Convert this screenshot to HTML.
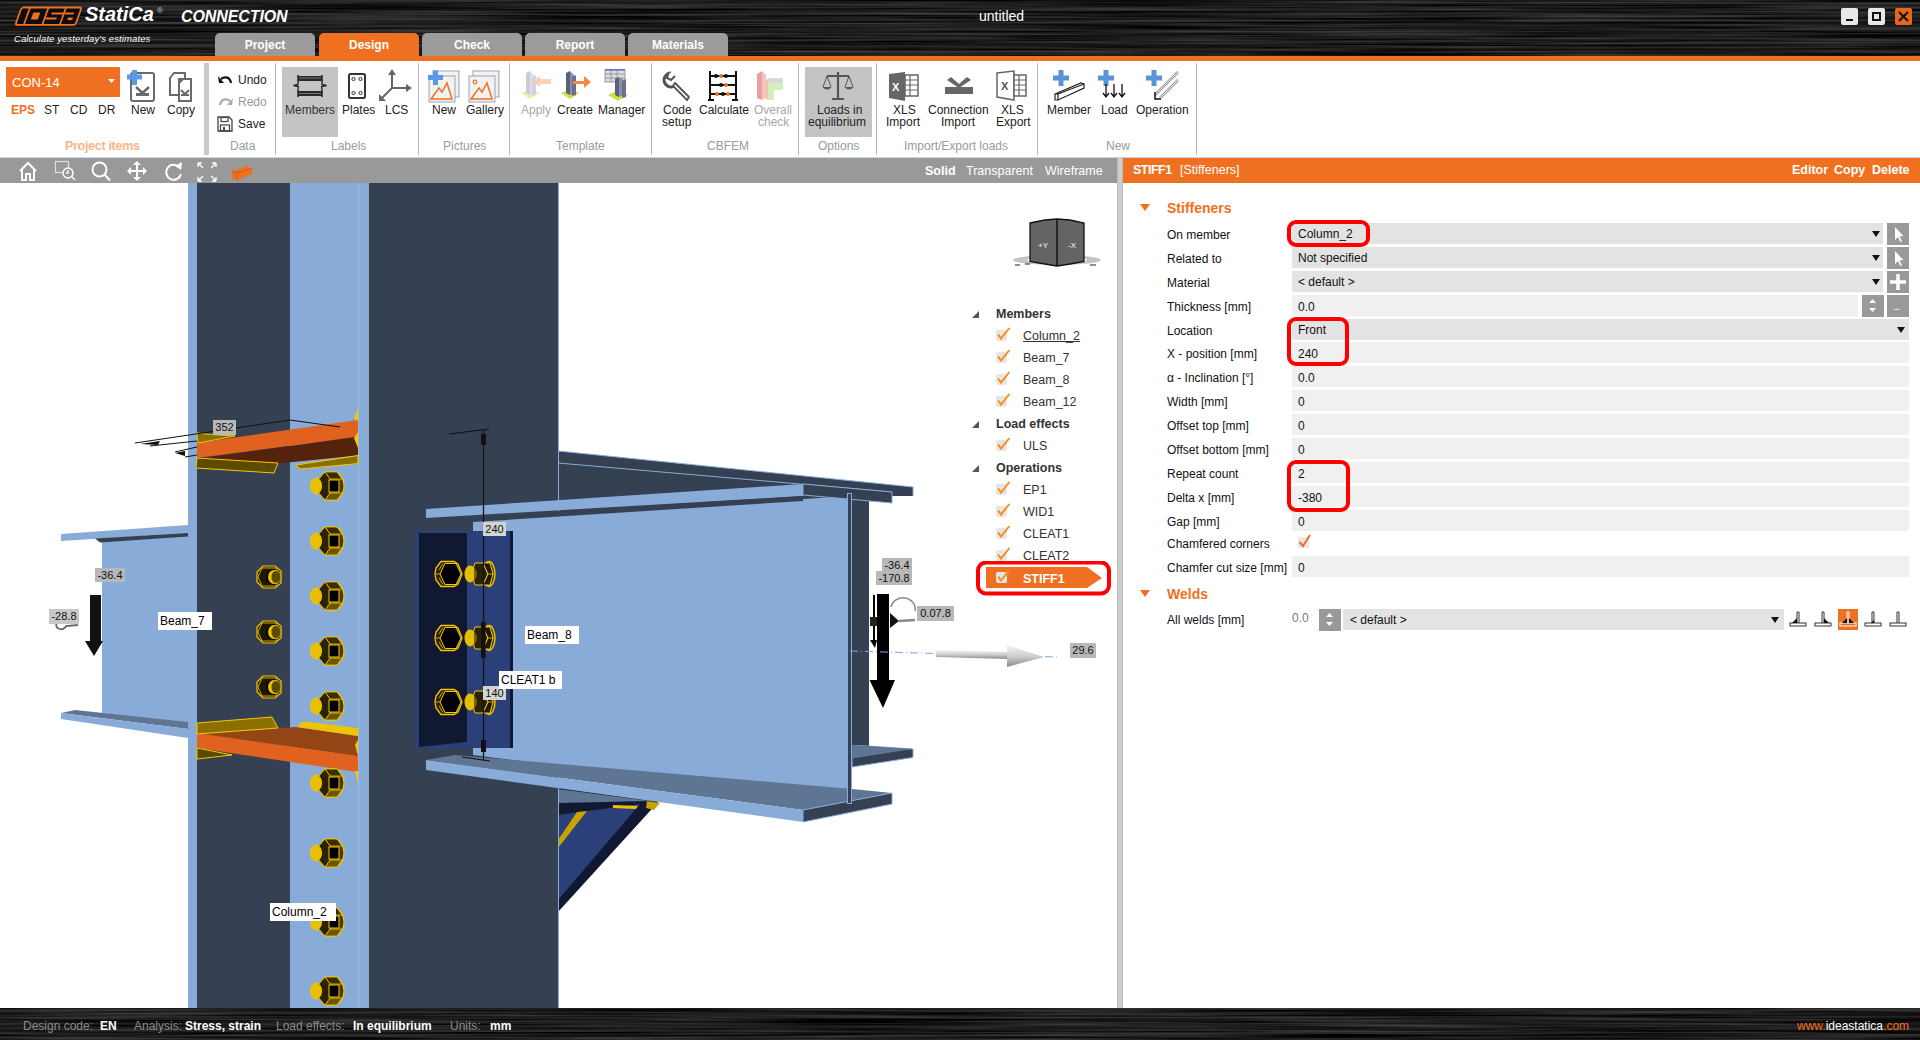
<!DOCTYPE html>
<html><head><meta charset="utf-8">
<style>
*{margin:0;padding:0;box-sizing:border-box}
html,body{width:1920px;height:1040px;overflow:hidden;background:#fff;font-family:"Liberation Sans",sans-serif;white-space:nowrap}
.a{position:absolute}
#title{left:0;top:0;width:1920px;height:56px;background:#151515;
 background-image:repeating-linear-gradient(180deg,rgba(255,255,255,0.05) 0px,rgba(255,255,255,0) 2px,rgba(0,0,0,0.2) 3px,rgba(255,255,255,0.03) 5px);}
.tab{top:33px;height:23px;width:100px;background:#9b9b9b;border-radius:5px 5px 0 0;color:#fff;font-weight:bold;font-size:12px;text-align:center;line-height:24px}
#oline{left:0;top:56px;width:1920px;height:5px;background:#f07022}
#ribbon{left:0;top:61px;width:1920px;height:96px;background:#fff}
.rl{font-size:12px;color:#222;text-align:center;line-height:13px;white-space:nowrap}
.grp{font-size:12px;color:#9a9a9a;text-align:center;top:139px;white-space:nowrap}
.sep{top:63px;width:1px;height:92px;background:#b8b8b8}
#vtool{left:0;top:158px;width:1117px;height:25px;background:#999}
#split{left:1117px;top:157px;width:6px;height:851px;background:#cccccc;border-left:1px solid #bdbdbd;border-right:1px solid #bdbdbd}
#phead{left:1123px;top:158px;width:797px;height:25px;background:#f07022;color:#fff;font-size:12px}
#view{left:0;top:183px;width:1117px;height:825px;background:#fff;overflow:hidden}
#status{left:0;top:1008px;width:1920px;height:32px;background:#141414;
 background-image:repeating-linear-gradient(180deg,rgba(255,255,255,0.05) 0px,rgba(255,255,255,0) 2px,rgba(0,0,0,0.2) 3px,rgba(255,255,255,0.03) 5px);font-size:12px}
.lab{left:1167px;font-size:12px;color:#111;white-space:nowrap}
.fld{left:1292px;height:21px;font-size:12px;color:#111;line-height:23px;padding-left:6px;white-space:nowrap}
.dd{background:#e3e3e3}
.tb{background:#f0f0f0;line-height:25px}
.btn{width:22px;height:22px;background:#999}
.redb{border:4px solid #ff0000;border-radius:9px}
.dl{background:#b8b8b8;font-size:11px;color:#111;text-align:center;line-height:15px;white-space:nowrap}
.wl{background:#fff;font-size:12px;color:#000;height:18px;line-height:18px;padding-left:2px;white-space:nowrap}
.st{top:1019px;font-size:12px;white-space:nowrap}
.b{font-weight:bold;color:#fff}
</style></head><body>
<div id="title" class="a"></div>
<svg class="a" style="left:0;top:0" width="1920" height="56"><filter id="br" x="0" y="0" width="100%" height="100%"><feTurbulence type="fractalNoise" baseFrequency="0.004 0.45" numOctaves="3" seed="7"/><feColorMatrix type="matrix" values="0 0 0 0 0  0 0 0 0 0  0 0 0 0 0  0 0 0 -1.8 1.4"/></filter><rect width="1920" height="56" fill="#3a3a3a"/><rect width="1920" height="56" fill="#000" filter="url(#br)"/></svg>
<svg class="a" style="left:0;top:0" width="90" height="30" viewBox="0 0 90 30">
 <g transform="matrix(1,0,-0.36,1,21,6.6)">
  <rect x="0.9" y="0.9" width="60" height="17.4" rx="2.2" fill="#0c0c0c" stroke="#f07022" stroke-width="1.8"/>
  <g fill="#f07022">
   <rect x="8.5" y="1" width="1.8" height="17"/>
   <rect x="27" y="1" width="1.8" height="17"/>
   <rect x="44.5" y="1" width="1.8" height="17"/>
   <rect x="14.5" y="6" width="7" height="7"/>
   <rect x="33" y="6" width="11.5" height="1.8"/>
   <rect x="28.8" y="11" width="11" height="1.8"/>
   <rect x="46.3" y="6" width="9" height="1.8"/>
   <rect x="51" y="11" width="5" height="2.5"/>
  </g>
 </g>
</svg>
<div class="a" style="left:85px;top:3px;font-size:20px;font-weight:bold;font-style:italic;color:#fff;letter-spacing:0px">StatiCa</div>
<div class="a" style="left:157px;top:6px;font-size:8px;color:#ccc">&#174;</div>
<div class="a" style="left:181px;top:8px;font-size:16px;font-weight:bold;font-style:italic;color:#fff;letter-spacing:-0.1px">CONNECTION</div>
<div class="a" style="left:14px;top:33px;font-size:9.5px;font-style:italic;color:#fff;letter-spacing:0.1px">Calculate yesterday's estimates</div>
<div class="a" style="left:979px;top:8px;font-size:14px;color:#fff">untitled</div>
<div class="a" style="left:1841px;top:8px;width:17px;height:17px;background:#e8e8e8;border-radius:2px"><div class="a" style="left:5px;top:11px;width:7px;height:2px;background:#111"></div></div>
<div class="a" style="left:1868px;top:8px;width:17px;height:17px;background:#e8e8e8;border-radius:2px"><div class="a" style="left:4px;top:4px;width:9px;height:9px;border:2px solid #111"></div></div>
<div class="a" style="left:1895px;top:8px;width:17px;height:17px;background:#e8651e;border-radius:2px"><svg class="a" style="left:3px;top:3px" width="11" height="11"><path d="M1,1 L10,10 M10,1 L1,10" stroke="#111" stroke-width="2"/></svg></div>

<div class="a tab" style="left:215px">Project</div>
<div class="a tab" style="left:319px;background:#f07022">Design</div>
<div class="a tab" style="left:422px">Check</div>
<div class="a tab" style="left:525px">Report</div>
<div class="a tab" style="left:628px">Materials</div>
<div id="oline" class="a"></div>
<div id="ribbon" class="a"></div>
<!-- Project items -->
<div class="a" style="left:6px;top:67px;width:114px;height:30px;background:#f07022"></div>
<div class="a" style="left:12px;top:75px;font-size:13px;color:#fff">CON-14</div>
<svg class="a" style="left:108px;top:79px" width="7" height="5"><polygon points="0,0 7,0 3.5,4" fill="#fff"/></svg>
<div class="a rl" style="left:11px;top:104px;color:#f07022;font-weight:bold">EPS</div>
<div class="a rl" style="left:44px;top:104px">ST</div>
<div class="a rl" style="left:70px;top:104px">CD</div>
<div class="a rl" style="left:98px;top:104px">DR</div>
<svg class="a" style="left:126px;top:70px" width="32" height="34" viewBox="0 0 32 34">
 <rect x="5" y="3" width="23" height="28" rx="2" fill="#fff" stroke="#6a6a6a" stroke-width="2"/>
 <path d="M10,17 L16.5,23 L23,17" fill="none" stroke="#6a6a6a" stroke-width="2.5"/>
 <rect x="10" y="23" width="13" height="3" fill="#6a6a6a"/>
 <path d="M1,7 H16 M8.5,0 V15" stroke="#5b9be6" stroke-width="5"/>
</svg>
<div class="a rl" style="left:131px;top:104px">New</div>
<svg class="a" style="left:166px;top:70px" width="30" height="34" viewBox="0 0 30 34">
 <path d="M4,8 L8,3 H19 V9 H13 V25 H4 Z" fill="#fff" stroke="#6a6a6a" stroke-width="2"/>
 <path d="M13,13 L17,9 H25 V31 H13 Z" fill="#fff" stroke="#6a6a6a" stroke-width="2"/>
 <path d="M15,20 L19,24 L23,20" fill="none" stroke="#6a6a6a" stroke-width="2"/>
 <rect x="15" y="24" width="8" height="2" fill="#6a6a6a"/>
</svg>
<div class="a rl" style="left:167px;top:104px">Copy</div>
<div class="a grp" style="left:65px;color:#f7b58a;font-size:12.5px;font-weight:bold;letter-spacing:-0.3px">Project items</div>
<div class="a" style="left:204px;top:63px;width:5px;height:92px;background:#c8c8c8"></div>
<!-- Data -->
<svg class="a" style="left:218px;top:73px" width="15" height="12" viewBox="0 0 15 12"><path d="M13,10 C12,4 7,3 3,6" fill="none" stroke="#111" stroke-width="2.2"/><polygon points="0,3 6,10 1,10" fill="#111"/></svg>
<div class="a rl" style="left:238px;top:74px">Undo</div>
<svg class="a" style="left:218px;top:95px" width="15" height="12" viewBox="0 0 15 12"><path d="M2,10 C3,4 8,3 12,6" fill="none" stroke="#aaa" stroke-width="2.2"/><polygon points="15,3 9,10 14,10" fill="#aaa"/></svg>
<div class="a rl" style="left:238px;top:96px;color:#9a9a9a">Redo</div>
<svg class="a" style="left:217px;top:116px" width="16" height="16" viewBox="0 0 16 16"><path d="M1,1 H12 L15,4 V15 H1 Z" fill="#fff" stroke="#444" stroke-width="1.3"/><rect x="4" y="1.5" width="7" height="4" fill="none" stroke="#444" stroke-width="1.2"/><rect x="3.5" y="9" width="9" height="6" fill="none" stroke="#444" stroke-width="1.2"/><rect x="6" y="11" width="2" height="4" fill="#444"/></svg>
<div class="a rl" style="left:238px;top:118px">Save</div>
<div class="a grp" style="left:230px">Data</div>
<div class="a sep" style="left:275px"></div>
<!-- Labels -->
<div class="a" style="left:282px;top:67px;width:56px;height:70px;background:#c4c4c4"></div>
<svg class="a" style="left:292px;top:74px" width="36" height="24" viewBox="0 0 36 24">
 <rect x="6" y="2" width="24" height="5" fill="#2a2a2a"/><rect x="6" y="17" width="24" height="5" fill="#2a2a2a"/>
 <path d="M7,4 H29 M7,19.5 H29" stroke="#777" stroke-width="1"/>
 <path d="M6,1 V8 M30,1 V8 M6,16 V23 M30,16 V23" stroke="#2a2a2a" stroke-width="1.6"/>
 <path d="M6,8 V10.5 L1.5,11.5 L6.5,12.5 L6,16" fill="none" stroke="#222" stroke-width="1.3"/>
 <path d="M30,8 V10.5 L34.5,11.5 L29.5,12.5 L30,16" fill="none" stroke="#222" stroke-width="1.3"/>
</svg>
<div class="a rl" style="left:285px;top:104px;width:50px;color:#333">Members</div>
<svg class="a" style="left:347px;top:72px" width="20" height="28" viewBox="0 0 20 28"><rect x="2" y="2" width="16" height="24" rx="1.5" fill="#fff" stroke="#333" stroke-width="2"/><circle cx="6.5" cy="7" r="1.6" fill="none" stroke="#333"/><circle cx="13.5" cy="7" r="1.6" fill="none" stroke="#333"/><circle cx="6.5" cy="21" r="1.6" fill="none" stroke="#333"/><circle cx="13.5" cy="21" r="1.6" fill="none" stroke="#333"/></svg>
<div class="a rl" style="left:342px;top:104px">Plates</div>
<svg class="a" style="left:377px;top:69px" width="36" height="34" viewBox="0 0 36 34"><path d="M15,19 V4 M15,19 H31 M15,19 L4,30" stroke="#666" stroke-width="2"/><polygon points="11,6 15,0 19,6" fill="#666"/><polygon points="29,15 35,19 29,23" fill="#666"/><polygon points="2,25 2,32 9,32" fill="#666"/></svg>
<div class="a rl" style="left:385px;top:104px">LCS</div>
<div class="a grp" style="left:331px">Labels</div>
<div class="a sep" style="left:418px"></div>
<!-- Pictures -->
<svg class="a" style="left:427px;top:69px" width="34" height="34" viewBox="0 0 34 34">
 <rect x="6" y="2" width="26" height="26" fill="#f2f2f2" stroke="#9aa3b5" stroke-width="1"/>
 <rect x="2" y="7" width="26" height="26" fill="#f2f2f2" stroke="#9aa3b5" stroke-width="1"/>
 <path d="M4,30 L12,19 L15,23 L20,14 L25,30 Z" fill="none" stroke="#f07022" stroke-width="1.5"/>
 <path d="M1,8.5 H16 M8.5,1.5 V16" stroke="#5b9be6" stroke-width="5"/>
</svg>
<div class="a rl" style="left:432px;top:104px">New</div>
<svg class="a" style="left:467px;top:69px" width="34" height="34" viewBox="0 0 34 34">
 <rect x="6" y="2" width="26" height="26" fill="#f2f2f2" stroke="#9aa3b5" stroke-width="1"/>
 <rect x="2" y="7" width="26" height="26" fill="#f2f2f2" stroke="#9aa3b5" stroke-width="1"/>
 <path d="M4,30 L12,19 L15,23 L20,14 L25,30 Z" fill="none" stroke="#f07022" stroke-width="1.5"/>
 <circle cx="8" cy="13" r="1.8" fill="none" stroke="#f07022" stroke-width="1.2"/>
</svg>
<div class="a rl" style="left:466px;top:104px">Gallery</div>
<div class="a grp" style="left:443px">Pictures</div>
<div class="a sep" style="left:509px"></div>
<!-- Template -->
<svg class="a" style="left:520px;top:69px" width="32" height="34" viewBox="0 0 32 34" opacity="0.45">
 <polygon points="1,24 10,20 19,24 10,30" fill="#cfe04a"/>
 <path d="M6,4 L10,2 V26 L6,24 Z" fill="#8a8fa8"/><path d="M10,2 V26 L14,24 V6 Z" fill="#b8bccf"/><path d="M12,8 L16,6 V26 L12,27 Z" fill="#9aa0bb"/>
 <polygon points="12,12 20,7 20,10 31,10 31,15 20,15 20,18" fill="#f59a5a"/>
</svg>
<div class="a rl" style="left:521px;top:104px;color:#a8a8a8">Apply</div>
<svg class="a" style="left:560px;top:69px" width="32" height="34" viewBox="0 0 32 34">
 <polygon points="1,24 10,20 19,24 10,30" fill="#cfe04a"/>
 <path d="M6,4 L10,2 V26 L6,24 Z" fill="#5a5f7a"/><path d="M10,2 V26 L14,24 V6 Z" fill="#8a8fa8"/><path d="M12,8 L16,6 V26 L12,27 Z" fill="#6b7090"/>
 <polygon points="13,12 24,12 24,7 31,13 24,19 24,15 13,15" fill="#f5884a"/>
</svg>
<div class="a rl" style="left:557px;top:104px">Create</div>
<svg class="a" style="left:603px;top:69px" width="30" height="34" viewBox="0 0 30 34">
 <polygon points="5,26 15,21 25,26 15,32" fill="#cfe04a"/>
 <rect x="2" y="1" width="20" height="12" fill="#ddd" stroke="#888" stroke-width="0.8"/><path d="M2,5 H22 M2,9 H22 M8,1 V13 M14,1 V13" stroke="#888" stroke-width="0.8"/><rect x="2" y="0" width="20" height="1.5" fill="#6a6ae0"/>
 <path d="M12,10 L16,8 V28 L12,26 Z" fill="#5a5f7a"/><path d="M16,8 V28 L20,26 V10 Z" fill="#8a8fa8"/><path d="M19,12 L23,10 V28 L19,29 Z" fill="#6b7090"/>
</svg>
<div class="a rl" style="left:598px;top:104px">Manager</div>
<div class="a grp" style="left:556px">Template</div>
<div class="a sep" style="left:651px"></div>
<!-- CBFEM -->
<svg class="a" style="left:661px;top:70px" width="32" height="32" viewBox="0 0 32 32"><path d="M10,3 A7,7 0 1 0 15,15 L27,27" fill="none" stroke="#555" stroke-width="3"/><path d="M8,2 L6,8 L10,10 L14,6" fill="#fff" stroke="#555" stroke-width="2"/><path d="M14,13 L28,27 L26,30 L12,16 Z" fill="#fff" stroke="#555" stroke-width="1.8"/></svg>
<div class="a rl" style="left:663px;top:104px">Code</div>
<div class="a rl" style="left:662px;top:116px">setup</div>
<svg class="a" style="left:707px;top:70px" width="32" height="32" viewBox="0 0 32 32"><path d="M3,1 V30 M29,1 V30 M1,30 H7 M25,30 H31 M3,6 H29 M3,15 H29 M3,24 H29" stroke="#111" stroke-width="2"/><g fill="#111"><circle cx="9" cy="6" r="2"/><circle cx="19" cy="6" r="2"/><circle cx="14" cy="15" r="2"/><circle cx="16" cy="24" r="2"/></g><g fill="#f07022"><circle cx="14" cy="6" r="2"/><circle cx="19" cy="15" r="2"/><circle cx="10" cy="24" r="2"/><circle cx="21" cy="24" r="2"/></g></svg>
<div class="a rl" style="left:699px;top:104px">Calculate</div>
<svg class="a" style="left:756px;top:70px" width="32" height="32" viewBox="0 0 32 32" opacity="0.55"><path d="M1,4 L6,1 V30 L1,28 Z" fill="#e05050"/><path d="M6,1 V30 L10,28 V5 Z" fill="#f09090"/><rect x="12" y="8" width="15" height="5" fill="#bbb"/><path d="M12,13 H27 V20 H18 V30 H12 Z" fill="#b6e08a"/><path d="M10,8 V29 L12,30 V10 Z" fill="#d8a070"/></svg>
<div class="a rl" style="left:754px;top:104px;color:#a8a8a8">Overall</div>
<div class="a rl" style="left:758px;top:116px;color:#a8a8a8">check</div>
<div class="a grp" style="left:707px">CBFEM</div>
<div class="a sep" style="left:798px"></div>
<!-- Options -->
<div class="a" style="left:805px;top:67px;width:67px;height:70px;background:#c4c4c4"></div>
<svg class="a" style="left:822px;top:71px" width="32" height="30" viewBox="0 0 32 30"><path d="M16,1 V27 M10,28 H22 M5,5 H27" stroke="#555" stroke-width="2.2"/><path d="M5,5 L1,16 M5,5 L9,16 M27,5 L23,16 M27,5 L31,16" stroke="#555" stroke-width="1"/><path d="M0.5,16 Q5,21 9.5,16 Z M22.5,16 Q27,21 31.5,16 Z" fill="#555"/></svg>
<div class="a rl" style="left:817px;top:104px">Loads in</div>
<div class="a rl" style="left:808px;top:116px">equilibrium</div>
<div class="a grp" style="left:818px">Options</div>
<div class="a sep" style="left:876px"></div>
<!-- Import/Export -->
<svg class="a" style="left:888px;top:71px" width="32" height="30" viewBox="0 0 32 30"><polygon points="1,3 17,1 17,30 1,27" fill="#666"/><rect x="17" y="4" width="13" height="21" fill="#fff" stroke="#666" stroke-width="1.5"/><path d="M17,9 H30 M17,14 H30 M17,19 H30 M22,4 V25" stroke="#666" stroke-width="1.2"/><text x="4" y="20" font-family="Liberation Sans" font-weight="bold" font-size="11" fill="#fff">X</text></svg>
<div class="a rl" style="left:893px;top:104px">XLS</div>
<div class="a rl" style="left:886px;top:116px">Import</div>
<svg class="a" style="left:944px;top:77px" width="30" height="18" viewBox="0 0 30 18"><polygon points="1,10 29,10 29,17 1,17" fill="#666"/><polygon points="3,3 7,0 15,7 23,0 27,3 15,11" fill="#666"/></svg>
<div class="a rl" style="left:928px;top:104px">Connection</div>
<div class="a rl" style="left:941px;top:116px">Import</div>
<svg class="a" style="left:996px;top:70px" width="32" height="31" viewBox="0 0 32 31"><polygon points="1,3 18,1 18,30 1,27" fill="#fff" stroke="#666" stroke-width="1.5"/><rect x="18" y="5" width="12" height="21" fill="#fff" stroke="#666" stroke-width="1.5"/><path d="M18,10 H30 M18,15 H30 M18,20 H30 M23,5 V26" stroke="#666" stroke-width="1.2"/><text x="5" y="20" font-family="Liberation Sans" font-weight="bold" font-size="11" fill="#555">X</text></svg>
<div class="a rl" style="left:1001px;top:104px">XLS</div>
<div class="a rl" style="left:996px;top:116px">Export</div>
<div class="a grp" style="left:904px">Import/Export loads</div>
<div class="a sep" style="left:1037px"></div>
<!-- New -->
<svg class="a" style="left:1052px;top:69px" width="34" height="34" viewBox="0 0 34 34"><path d="M1,9 H17 M9,1 V17" stroke="#5b93d6" stroke-width="5"/><path d="M3,25 L29,14 L32,15 V19 L6,31 H3 Z M3,25 H6 V31 M6,25 L32,15" fill="#fff" stroke="#222" stroke-width="1.2"/></svg>
<div class="a rl" style="left:1047px;top:104px">Member</div>
<svg class="a" style="left:1097px;top:69px" width="32" height="32" viewBox="0 0 32 32"><path d="M1,9 H17 M9,1 V17" stroke="#5b93d6" stroke-width="5"/><path d="M9,15 V28 M17,15 V28 M25,15 V28 M6,24 L9,28 L12,24 M14,24 L17,28 L20,24 M22,24 L25,28 L28,24" fill="none" stroke="#111" stroke-width="1.3"/></svg>
<div class="a rl" style="left:1101px;top:104px">Load</div>
<svg class="a" style="left:1145px;top:69px" width="36" height="32" viewBox="0 0 36 32"><path d="M1,9 H17 M9,1 V17" stroke="#5b93d6" stroke-width="5"/><path d="M10,26 L33,3 M15,29 L33,11" stroke="#999" stroke-width="2.5"/><path d="M10,26 L33,3 M15,29 L33,11" stroke="#fff" stroke-width="0.8"/><path d="M10,23 V30 H16" fill="none" stroke="#111" stroke-width="1.5"/></svg>
<div class="a rl" style="left:1136px;top:104px">Operation</div>
<div class="a grp" style="left:1106px">New</div>
<div class="a sep" style="left:1196px"></div>

<div class="a" style="left:0;top:157px;width:1920px;height:1px;background:#c9d6e3"></div>
<div id="vtool" class="a"></div>
<div id="split" class="a"></div>
<div id="phead" class="a"></div>
<div class="a" style="left:1133px;top:163px;font-size:12.5px;font-weight:bold;color:#fff;letter-spacing:-0.5px">STIFF1</div>
<div class="a" style="left:1180px;top:163px;font-size:12.5px;color:#fff">[Stiffeners]</div>
<div class="a" style="left:1792px;top:163px;font-size:12.5px;font-weight:bold;color:#fff">Editor</div>
<div class="a" style="left:1834px;top:163px;font-size:12.5px;font-weight:bold;color:#fff">Copy</div>
<div class="a" style="left:1872px;top:163px;font-size:12.5px;font-weight:bold;color:#fff">Delete</div>
<svg class="a" style="left:1140px;top:204px" width="10" height="7"><polygon points="0,0 10,0 5,7" fill="#f07022"/></svg>
<div class="a" style="left:1167px;top:200px;font-size:14px;font-weight:bold;color:#f07022">Stiffeners</div>
<div class="a lab" style="top:228px">On member</div>
<div class="a fld dd" style="top:223px;width:591px">Column_2</div>
<svg class="a" style="left:1872px;top:231px" width="8" height="6"><polygon points="0,0 8,0 4,6" fill="#111"/></svg>
<div class="a btn" style="top:223px;left:1887px"></div>
<div class="a lab" style="top:252px">Related to</div>
<div class="a fld dd" style="top:247px;width:591px">Not specified</div>
<svg class="a" style="left:1872px;top:255px" width="8" height="6"><polygon points="0,0 8,0 4,6" fill="#111"/></svg>
<div class="a btn" style="top:247px;left:1887px"></div>
<div class="a lab" style="top:276px">Material</div>
<div class="a fld dd" style="top:271px;width:591px">&lt; default &gt;</div>
<svg class="a" style="left:1872px;top:279px" width="8" height="6"><polygon points="0,0 8,0 4,6" fill="#111"/></svg>
<div class="a btn" style="top:271px;left:1887px"></div>
<div class="a lab" style="top:300px">Thickness [mm]</div>
<div class="a fld tb" style="top:295px;width:566px">0.0</div>
<div class="a btn" style="top:295px;left:1862px"></div>
<div class="a btn" style="top:295px;left:1887px"></div>
<div class="a lab" style="top:324px">Location</div>
<div class="a fld dd" style="top:319px;width:617px">Front</div>
<svg class="a" style="left:1897px;top:327px" width="8" height="6"><polygon points="0,0 8,0 4,6" fill="#111"/></svg>
<div class="a lab" style="top:347px">X - position [mm]</div>
<div class="a fld tb" style="top:342px;width:617px">240</div>
<div class="a lab" style="top:371px">&#945; - Inclination [&#176;]</div>
<div class="a fld tb" style="top:366px;width:617px">0.0</div>
<div class="a lab" style="top:395px">Width [mm]</div>
<div class="a fld tb" style="top:390px;width:617px">0</div>
<div class="a lab" style="top:419px">Offset top [mm]</div>
<div class="a fld tb" style="top:414px;width:617px">0</div>
<div class="a lab" style="top:443px">Offset bottom [mm]</div>
<div class="a fld tb" style="top:438px;width:617px">0</div>
<div class="a lab" style="top:467px">Repeat count</div>
<div class="a fld tb" style="top:462px;width:617px">2</div>
<div class="a lab" style="top:491px">Delta x [mm]</div>
<div class="a fld tb" style="top:486px;width:617px">-380</div>
<div class="a lab" style="top:515px">Gap [mm]</div>
<div class="a fld tb" style="top:510px;width:617px">0</div>
<svg class="a" style="left:1887px;top:223px" width="22" height="22"><path d="M8,4 L8,17 L11,14 L13.5,19 L15,18.3 L12.5,13.3 L16.5,13.3 Z" fill="#fff"/></svg>
<svg class="a" style="left:1887px;top:247px" width="22" height="22"><path d="M8,4 L8,17 L11,14 L13.5,19 L15,18.3 L12.5,13.3 L16.5,13.3 Z" fill="#fff"/></svg>
<svg class="a" style="left:1887px;top:271px" width="22" height="22"><path d="M11,3 V19 M3,11 H19" stroke="#fff" stroke-width="3.5"/></svg>
<svg class="a" style="left:1862px;top:295px" width="21" height="21"><polygon points="7,8 14,8 10.5,4" fill="#fff"/><polygon points="7,13 14,13 10.5,17" fill="#fff"/></svg>
<div class="a" style="left:1893px;top:300px;font-size:11px;color:#fff;letter-spacing:-1px">...</div>
<div class="a lab" style="top:537px">Chamfered corners</div>
<div class="a" style="left:1298px;top:537px;width:11px;height:11px;background:#e8e8e8"></div>
<svg class="a" style="left:1297px;top:533px" width="16" height="16"><path d="M2.5,9 L6,13 L13,2" fill="none" stroke="#f07022" stroke-width="2"/></svg>
<div class="a lab" style="top:561px">Chamfer cut size [mm]</div>
<div class="a fld tb" style="top:556px;width:617px">0</div>
<svg class="a" style="left:1140px;top:590px" width="10" height="7"><polygon points="0,0 10,0 5,7" fill="#f07022"/></svg>
<div class="a" style="left:1167px;top:586px;font-size:14px;font-weight:bold;color:#f07022">Welds</div>
<div class="a lab" style="top:613px">All welds [mm]</div>
<div class="a" style="left:1292px;top:611px;font-size:12px;color:#777">0.0</div>
<div class="a btn" style="top:609px;left:1319px"></div>
<svg class="a" style="left:1319px;top:609px" width="21" height="21"><polygon points="7,8 14,8 10.5,4" fill="#fff"/><polygon points="7,13 14,13 10.5,17" fill="#fff"/></svg>
<div class="a fld dd" style="top:609px;left:1343px;width:441px;padding-left:7px">&lt; default &gt;</div>
<svg class="a" style="left:1771px;top:617px" width="8" height="6"><polygon points="0,0 8,0 4,6" fill="#111"/></svg>
<svg class="a" style="left:1788px;top:609px" width="20" height="21" viewBox="0 0 20 21"><path d="M9,3 V14 M11,3 V14 M9,3 H11" stroke="#333" stroke-width="1" fill="none"/><rect x="2" y="14" width="16" height="3" fill="#fff" stroke="#333" stroke-width="1"/><polygon points="4,14 9,14 9,9" fill="#111"/></svg>
<svg class="a" style="left:1813px;top:609px" width="20" height="21" viewBox="0 0 20 21"><path d="M9,3 V14 M11,3 V14 M9,3 H11" stroke="#333" stroke-width="1" fill="none"/><rect x="2" y="14" width="16" height="3" fill="#fff" stroke="#333" stroke-width="1"/><polygon points="11,9 11,14 16,14" fill="#111"/></svg>
<svg class="a" style="left:1838px;top:609px" width="20" height="21" viewBox="0 0 20 21"><rect x="0" y="0" width="20" height="21" fill="#f07022"/><path d="M9,3 V14 M11,3 V14 M9,3 H11" stroke="#fff" stroke-width="1" fill="none"/><rect x="2" y="14" width="16" height="3" fill="none" stroke="#fff" stroke-width="1"/><polygon points="4,14 9,14 9,9" fill="#111"/><polygon points="11,9 11,14 16,14" fill="#111"/></svg>
<svg class="a" style="left:1863px;top:609px" width="20" height="21" viewBox="0 0 20 21"><path d="M9,3 V14 M11,3 V14 M9,3 H11" stroke="#333" stroke-width="1" fill="none"/><rect x="2" y="14" width="16" height="3" fill="#fff" stroke="#333" stroke-width="1"/><polygon points="8,14 11,14 11,11" fill="#111"/></svg>
<svg class="a" style="left:1888px;top:609px" width="20" height="21" viewBox="0 0 20 21"><path d="M9,3 V14 M11,3 V14 M9,3 H11" stroke="#333" stroke-width="1" fill="none"/><rect x="2" y="14" width="16" height="3" fill="#fff" stroke="#333" stroke-width="1"/></svg>
<div class="a redb" style="left:1287px;top:220px;width:83px;height:27px"></div>
<div class="a redb" style="left:1287px;top:317px;width:62px;height:49px"></div>
<div class="a redb" style="left:1287px;top:460px;width:63px;height:52px"></div>
<div id="status" class="a"><svg class="a" style="left:0;top:0" width="1920" height="33"><filter id="br2" x="0" y="0" width="100%" height="100%"><feTurbulence type="fractalNoise" baseFrequency="0.004 0.45" numOctaves="3" seed="3"/><feColorMatrix type="matrix" values="0 0 0 0 0  0 0 0 0 0  0 0 0 0 0  0 0 0 -1.8 1.4"/></filter><rect width="1920" height="33" fill="#3a3a3a"/><rect width="1920" height="33" fill="#000" filter="url(#br2)"/></svg></div>
<div id="view" class="a"></div>
<svg class="a" style="left:0;top:183px" width="1117" height="825" viewBox="0 183 1117 825">
<defs>
 <g id="bolt">
  <path d="M-2,-14 L10,-14 Q17,-8 17,0 Q17,8 10,14 L-2,14 L-10,5 L-10,-5 Z" fill="#4a3a00" stroke="#f5c800" stroke-width="1.2"/>
  <path d="M-2,-14 L10,-14 L15,-7 L3,-7 Z" fill="#3a2d00" stroke="#f5c800" stroke-width="0.8"/>
  <path d="M-2,14 L10,14 L15,7 L3,7 Z" fill="#6b5600" stroke="#f5c800" stroke-width="0.8"/>
  <path d="M-10,-5 L-2,-14 L3,-7 L3,7 L-2,14 L-10,5 Z" fill="#2a2200" stroke="#f5c800" stroke-width="0.8"/>
  <rect x="2" y="-6" width="10" height="12" fill="#000" stroke="#f5c800" stroke-width="1"/>
  <ellipse cx="-11" cy="0" rx="5.5" ry="8" fill="#e8c000" stroke="#f5c800" stroke-width="1"/>
 </g>
 <g id="nut">
  <path d="M-6,-11 L6,-11 L12,-6 L12,6 L6,11 L-6,11 L-12,5 L-12,-5 Z" fill="#2a2200" stroke="#f5c800" stroke-width="1.2"/>
  <path d="M-7,-9 L7,-9 L11,0 L7,9 L-7,9 L-11,0 Z" fill="#1e1800" stroke="#f5c800" stroke-width="0.8"/>
  <ellipse cx="4" cy="0" rx="7" ry="7.5" fill="#000"/>
  <ellipse cx="5" cy="0" rx="6" ry="7" fill="#e8c000"/>
  <ellipse cx="7" cy="0" rx="5" ry="6.5" fill="#5c4800" stroke="#f5c800" stroke-width="0.8"/>
 </g>
 <g id="hexnut">
  <path d="M-7,-12.5 L6,-12.5 L10,-10 L14,0 L10,10 L6,12.5 L-7,12.5 L-12,6 L-13,0 L-12,-6 Z" fill="#2a2200" stroke="#f5c800" stroke-width="1.3"/>
  <path d="M-3,-10.5 L8,-10.5 L13,0 L8,10.5 L-3,10.5 L-8,0 Z" fill="#000" stroke="#f5c800" stroke-width="1"/>
  <path d="M-8,0 H-12 M-5,-10.5 L-9,-4 M-5,10.5 L-9,4" stroke="#f5c800" stroke-width="0.8"/>
 </g>
 <g id="cbolt">
  <ellipse cx="9" cy="0" rx="6" ry="12.5" fill="#5a4800" stroke="#f5c800" stroke-width="1.3"/>
  <path d="M-5,-11 L3,-11 L8,0 L3,11 L-5,11 L-9,0 Z" fill="#2a2200" stroke="#f5c800" stroke-width="1"/>
  <path d="M3,-11 L10,-11 L13,0 L10,11 L3,11 L8,0 Z" fill="#1e1800" stroke="#f5c800" stroke-width="1"/>
  <path d="M8,0 H13" stroke="#f5c800" stroke-width="0.8"/>
  <ellipse cx="-10" cy="0" rx="5.5" ry="8.5" fill="#e6be00"/>
  <path d="M-6,-7 Q0,0 -6,7" fill="#7a6200"/>
 </g>
</defs>
<!-- Beam_7 left -->
<polygon points="102,539 188,533 188,724 102,713" fill="#88abd8"/>
<polygon points="61,534 188,525 188,533 61,541" fill="#88abd8"/>
<polygon points="95,538.5 188,533 188,536.5 100,542.5" fill="#354152"/>
<polygon points="61,713 75,710 188,722 188,729" fill="#5e7594"/>
<polygon points="61,713 188,729 188,738 61,719" fill="#88abd8"/>
<!-- Beam_12 back (dark) -->
<polygon points="558,451 913,487 913,496 869,496 869,760 558,760" fill="#354152"/>
<polyline points="558,451 913,487 913,496" fill="none" stroke="#88abd8" stroke-width="1"/>
<line x1="558" y1="463" x2="892" y2="492" stroke="#88abd8" stroke-width="1"/>
<polygon points="852,745 913,749 913,757.5 852,767" fill="#354152" stroke="#88abd8" stroke-width="1"/>
<polygon points="852,745 913,749 852,758.5" fill="#5e7594"/>
<!-- brace below -->
<polygon points="558,785 660,800 558,912" fill="#111831"/>
<polygon points="558,789 650,801 558,803" fill="#5e7594"/>
<polygon points="558,815 640,804 558,900" fill="#2b4079"/>
<polygon points="558,840 577,812 587,811 558,848" fill="#c9a200"/>
<polygon points="613,805 638,806 636,809 613,808" fill="#f0c000"/>
<polygon points="647,801 660,803 654,810 646,808" fill="#c9a200"/>
<!-- Column -->
<rect x="188" y="183" width="9" height="825" fill="#88abd8"/>
<rect x="197" y="183" width="93" height="825" fill="#354152"/>
<rect x="290" y="183" width="79" height="825" fill="#88abd8"/>
<rect x="358" y="183" width="1" height="825" fill="#9bbbe4"/>
<rect x="369" y="183" width="189" height="825" fill="#354152"/>
<line x1="558.5" y1="183" x2="558.5" y2="1008" stroke="#88abd8" stroke-width="1"/>
<!-- Beam_8 front -->
<polygon points="473,521 850,496 850,803 473,755" fill="#88abd8"/>
<polygon points="426,509 803,484 803,496 426,518" fill="#88abd8"/>
<polygon points="436,519 803,496 803,501 473,522" fill="#354152"/>
<polygon points="803,484 892,492 892,503 803,495" fill="#354152" stroke="#88abd8" stroke-width="1"/>
<polygon points="426,760 455,755 852,789 892,793 803,810" fill="#5e7594"/>
<polygon points="426,760 803,810 803,822 426,770" fill="#88abd8"/>
<polygon points="803,810 892,793 892,804 803,822" fill="#354152" stroke="#88abd8" stroke-width="1"/>
<rect x="847.5" y="493.5" width="4" height="310" fill="#354152" stroke="#88abd8" stroke-width="1"/>
<rect x="852" y="505" width="17" height="240" fill="#354152"/>
<!-- cleat -->
<polygon points="415,531 513,531 513,748 415,748" fill="#2b4079"/>
<polygon points="419,533 467,533 467,742 419,747" fill="#111831"/>
<rect x="510" y="531" width="3" height="217" fill="#111831"/>
<!-- Upper stiffener -->
<polygon points="197,443 358,420 358,437 197,458" fill="#e0621e"/>
<polygon points="197,459 358,436.5 358,455.5 278,463.5 197,461" fill="#55230c"/>
<polygon points="197,458 278,463 274,473 196,468" fill="#5e4b00" stroke="#f5c800" stroke-width="1"/>
<polygon points="296,465 358,455.5 358,463.6 300,469" fill="#8b7000" stroke="#f5c800" stroke-width="1"/>
<polygon points="197,433 212,434.5 235,436 198,443" fill="#8b7000" stroke="#f5c800" stroke-width="1"/>
<polygon points="354,418 358,408 358,421" fill="#f5c800"/>
<polygon points="354,438 358,432 358,448" fill="#f5c800"/>
<!-- Lower stiffener -->
<polygon points="197,733 296,727 358,736 358,756.5" fill="#944515"/>
<polygon points="197,733 358,756 358,772 197,748" fill="#e0621e"/>
<polygon points="197,723 272,717 278,728 197,734" fill="#8b7000" stroke="#f5c800" stroke-width="1"/>
<polygon points="297,727 302,722 310,722 358,728 358,736" fill="#eec400"/>
<polygon points="197,748 232,755 197,759" fill="#5a4800" stroke="#f5c800" stroke-width="1"/>
<polygon points="355,771 358,771 358,784" fill="#f5c800"/>
<polygon points="355,745 358,740 358,756" fill="#f5c800"/>
<!-- bolts on column web -->
<use href="#bolt" x="327" y="486"/>
<use href="#bolt" x="327" y="541"/>
<use href="#bolt" x="327" y="596"/>
<use href="#bolt" x="327" y="651"/>
<use href="#bolt" x="327" y="706"/>
<use href="#bolt" x="327" y="783"/>
<use href="#bolt" x="327" y="853"/>
<use href="#bolt" x="327" y="922"/>
<use href="#bolt" x="327" y="991"/>
<use href="#nut" x="269" y="577"/>
<use href="#nut" x="269" y="632"/>
<use href="#nut" x="269" y="687"/>
<use href="#hexnut" x="448" y="574"/>
<use href="#hexnut" x="448" y="638"/>
<use href="#hexnut" x="448" y="702"/>
<use href="#cbolt" x="480" y="574"/>
<use href="#cbolt" x="480" y="638"/>
<use href="#cbolt" x="480" y="702"/>
</svg>

<!-- viewport toolbar icons -->
<svg class="a" style="left:0;top:157px" width="260" height="26" viewBox="0 157 260 26">
 <path d="M20,171 L28,163 L36,171 M22,169 V180 H26 V174 H30 V180 H34 V169" fill="none" stroke="#fff" stroke-width="2"/>
 <rect x="55.5" y="161.5" width="13" height="11" fill="none" stroke="#e0e0e0" stroke-width="1.2"/>
 <circle cx="68" cy="173" r="5" fill="#999" stroke="#fff" stroke-width="1.5"/><path d="M68,170 V173 H66 M71.5,176.5 L75,180" stroke="#fff" stroke-width="1.3" fill="none"/>
 <circle cx="99.5" cy="169.5" r="7" fill="none" stroke="#fff" stroke-width="2"/><path d="M104.5,174.5 L110,180.5" stroke="#fff" stroke-width="2.2"/>
 <path d="M137,162 V180 M128,171 H146" stroke="#fff" stroke-width="2"/>
 <polygon points="133,165 137,161 141,165" fill="#fff"/><polygon points="133,177 137,181 141,177" fill="#fff"/><polygon points="131,167 127,171 131,175" fill="#fff"/><polygon points="143,167 147,171 143,175" fill="#fff"/>
 <path d="M179,167 A7.5,7.5 0 1 0 181,174" fill="none" stroke="#fff" stroke-width="2"/><polygon points="175,166 182,162 181,170" fill="#fff"/>
 <path d="M198,163 L203,168 M198,163 H202 M198,163 V167 M216,163 L211,168 M216,163 H212 M216,163 V167 M198,181 L203,176 M198,181 H202 M198,181 V177 M216,181 L211,176 M216,181 H212 M216,181 V177" stroke="#fff" stroke-width="1.3" fill="none"/>
 <polygon points="232,171 247,166 252,168 252,174 238,180 232,179" fill="#f07022"/><path d="M232,171 L237,173 L252,168 M237,173 V180" stroke="#c85510" stroke-width="0.8" fill="none"/>
</svg>
<div class="a" style="left:925px;top:164px;font-size:12.5px;font-weight:bold;color:#fff">Solid</div>
<div class="a" style="left:966px;top:164px;font-size:12.5px;color:#fff">Transparent</div>
<div class="a" style="left:1045px;top:164px;font-size:12.5px;color:#fff">Wireframe</div>
<!-- nav cube -->
<svg class="a" style="left:1005px;top:212px" width="105" height="60" viewBox="1005 212 105 60">
 <ellipse cx="1057" cy="260" rx="44" ry="5" fill="#c4c4c4"/>
 <ellipse cx="1057" cy="260" rx="30" ry="4" fill="#fff"/>
 <path d="M1015,265 H1020 M1025,264 H1030 M1090,265 H1096" stroke="#222" stroke-width="1"/>
 <polygon points="1030,223 1045,220 1057,219 1070,220 1084,223 1084,261.5 1070,264 1057,266 1045,264 1030,261.5" fill="#646464" stroke="#111" stroke-width="1.3"/>
 <line x1="1057" y1="219" x2="1057" y2="266" stroke="#111" stroke-width="1.5"/>
 <text x="1038" y="248" font-family="Liberation Sans" font-size="8" fill="#fff">+Y</text>
 <text x="1068" y="248" font-family="Liberation Sans" font-size="8" fill="#fff">-X</text>
</svg>
<!-- dimension lines & arrows overlay -->
<svg class="a" style="left:0;top:183px" width="1117" height="825" viewBox="0 183 1117 825">
 <!-- 352 dim -->
 <path d="M135,443 L290,420 L340,427 M150,446 L197,441 M175,452 L197,447 M185,457 L197,455" fill="none" stroke="#111" stroke-width="1"/>
 <path d="M140,444 L160,441 L158,445 Z M175,453 L185,451 L185,456 Z" fill="#111"/>
 <!-- vertical dim 240/140 -->
 <path d="M483.5,430 V761 M449,434 L489,429 M462,757 L490,761" stroke="#111" stroke-width="1.2" fill="none"/>
 <rect x="481" y="434" width="5" height="11" fill="#111"/>
 <rect x="481" y="622" width="4.5" height="36" fill="#111"/>
 <rect x="481" y="740" width="5" height="12" fill="#111"/>
 <!-- left arrow beam7 -->
 <rect x="90" y="595" width="11" height="47" fill="#111"/>
 <polygon points="85,641 103,641 94,656" fill="#111"/>
 <path d="M58,622 A5,4 0 1 0 66,626 L78,625" fill="none" stroke="#666" stroke-width="1.8"/>
 <!-- right big arrow -->
 <rect x="877" y="594" width="12" height="87" fill="#000"/>
 <polygon points="869.5,680 895,680 883,708" fill="#000"/>
 <rect x="873" y="595" width="2" height="45" fill="#000"/>
 <polygon points="870,640 877,640 875,648" fill="#000"/>
 <rect x="870" y="617" width="7" height="9" fill="#222"/>
 <path d="M891,607 A12,11 0 0 1 915,611" fill="none" stroke="#888" stroke-width="1.5"/>
 <polygon points="890,613 899,621 890,628" fill="#111"/>
 <path d="M899,621 L915,620" stroke="#888" stroke-width="2.5"/>
 <path d="M850,651 L1057,657" stroke="#7aa8e6" stroke-width="1" stroke-dasharray="8,3,1,3"/>
 <defs><linearGradient id="gs" x1="0" y1="0" x2="0" y2="1"><stop offset="0" stop-color="#f4f4f4"/><stop offset="0.5" stop-color="#cfcfcf"/><stop offset="1" stop-color="#8a8a8a"/></linearGradient></defs>
 <polygon points="936,650 1007,652 1007,659 936,657" fill="url(#gs)"/>
 <polygon points="1007,645 1044,657 1007,667" fill="url(#gs)"/>
</svg>
<!-- labels -->
<div class="a dl" style="left:213px;top:420px;width:23px;height:15px">352</div>
<div class="a dl" style="left:483px;top:522px;width:23px;height:14px;background:#d4d4d4">240</div>
<div class="a dl" style="left:483px;top:686px;width:23px;height:14px;background:#d4d4d4">140</div>
<div class="a dl" style="left:95px;top:568px;width:30px;height:14px">-36.4</div>
<div class="a dl" style="left:49px;top:609px;width:30px;height:15px;background:#c8c8c8">-28.8</div>
<div class="a dl" style="left:882px;top:558px;width:30px;height:13px">-36.4</div>
<div class="a dl" style="left:876px;top:571px;width:36px;height:14px">-170.8</div>
<div class="a dl" style="left:917px;top:606px;width:37px;height:15px">0.07.8</div>
<div class="a dl" style="left:1070px;top:643px;width:26px;height:15px">29.6</div>
<div class="a wl" style="left:158px;top:612px;width:54px">Beam_7</div>
<div class="a wl" style="left:525px;top:626px;width:54px">Beam_8</div>
<div class="a wl" style="left:499px;top:671px;width:63px">CLEAT1 b</div>
<div class="a wl" style="left:270px;top:903px;width:66px">Column_2</div>
<!-- tree -->
<div class="a" style="left:0;top:0">
<svg class="a" style="left:972px;top:311px" width="7" height="7"><polygon points="7,0 7,7 0,7" fill="#555"/></svg>
<div class="a" style="left:996px;top:307px;font-size:12.5px;font-weight:bold;color:#333">Members</div>
<div class="a" style="left:996px;top:330px;width:11px;height:11px;background:#e6e6e6;border-radius:2px"></div>
<svg class="a" style="left:996px;top:327px" width="16" height="14"><path d="M2.5,8 L5,11.5 L13,1.5" fill="none" stroke="#ff8c1a" stroke-width="2" stroke-linecap="round"/></svg>
<div class="a" style="left:1023px;top:329px;font-size:12.5px;color:#333;text-decoration:underline;">Column_2</div>
<div class="a" style="left:996px;top:352px;width:11px;height:11px;background:#e6e6e6;border-radius:2px"></div>
<svg class="a" style="left:996px;top:349px" width="16" height="14"><path d="M2.5,8 L5,11.5 L13,1.5" fill="none" stroke="#ff8c1a" stroke-width="2" stroke-linecap="round"/></svg>
<div class="a" style="left:1023px;top:351px;font-size:12.5px;color:#333;">Beam_7</div>
<div class="a" style="left:996px;top:374px;width:11px;height:11px;background:#e6e6e6;border-radius:2px"></div>
<svg class="a" style="left:996px;top:371px" width="16" height="14"><path d="M2.5,8 L5,11.5 L13,1.5" fill="none" stroke="#ff8c1a" stroke-width="2" stroke-linecap="round"/></svg>
<div class="a" style="left:1023px;top:373px;font-size:12.5px;color:#333;">Beam_8</div>
<div class="a" style="left:996px;top:396px;width:11px;height:11px;background:#e6e6e6;border-radius:2px"></div>
<svg class="a" style="left:996px;top:393px" width="16" height="14"><path d="M2.5,8 L5,11.5 L13,1.5" fill="none" stroke="#ff8c1a" stroke-width="2" stroke-linecap="round"/></svg>
<div class="a" style="left:1023px;top:395px;font-size:12.5px;color:#333;">Beam_12</div>
<svg class="a" style="left:972px;top:421px" width="7" height="7"><polygon points="7,0 7,7 0,7" fill="#555"/></svg>
<div class="a" style="left:996px;top:417px;font-size:12.5px;font-weight:bold;color:#333">Load effects</div>
<div class="a" style="left:996px;top:440px;width:11px;height:11px;background:#e6e6e6;border-radius:2px"></div>
<svg class="a" style="left:996px;top:437px" width="16" height="14"><path d="M2.5,8 L5,11.5 L13,1.5" fill="none" stroke="#ff8c1a" stroke-width="2" stroke-linecap="round"/></svg>
<div class="a" style="left:1023px;top:439px;font-size:12.5px;color:#333;">ULS</div>
<svg class="a" style="left:972px;top:465px" width="7" height="7"><polygon points="7,0 7,7 0,7" fill="#555"/></svg>
<div class="a" style="left:996px;top:461px;font-size:12.5px;font-weight:bold;color:#333">Operations</div>
<div class="a" style="left:996px;top:484px;width:11px;height:11px;background:#e6e6e6;border-radius:2px"></div>
<svg class="a" style="left:996px;top:481px" width="16" height="14"><path d="M2.5,8 L5,11.5 L13,1.5" fill="none" stroke="#ff8c1a" stroke-width="2" stroke-linecap="round"/></svg>
<div class="a" style="left:1023px;top:483px;font-size:12.5px;color:#333;">EP1</div>
<div class="a" style="left:996px;top:506px;width:11px;height:11px;background:#e6e6e6;border-radius:2px"></div>
<svg class="a" style="left:996px;top:503px" width="16" height="14"><path d="M2.5,8 L5,11.5 L13,1.5" fill="none" stroke="#ff8c1a" stroke-width="2" stroke-linecap="round"/></svg>
<div class="a" style="left:1023px;top:505px;font-size:12.5px;color:#333;">WID1</div>
<div class="a" style="left:996px;top:528px;width:11px;height:11px;background:#e6e6e6;border-radius:2px"></div>
<svg class="a" style="left:996px;top:525px" width="16" height="14"><path d="M2.5,8 L5,11.5 L13,1.5" fill="none" stroke="#ff8c1a" stroke-width="2" stroke-linecap="round"/></svg>
<div class="a" style="left:1023px;top:527px;font-size:12.5px;color:#333;">CLEAT1</div>
<div class="a" style="left:996px;top:550px;width:11px;height:11px;background:#e6e6e6;border-radius:2px"></div>
<svg class="a" style="left:996px;top:547px" width="16" height="14"><path d="M2.5,8 L5,11.5 L13,1.5" fill="none" stroke="#ff8c1a" stroke-width="2" stroke-linecap="round"/></svg>
<div class="a" style="left:1023px;top:549px;font-size:12.5px;color:#333;">CLEAT2</div>
<svg class="a" style="left:976px;top:561px" width="135" height="35"><polygon points="10,6 111,6 126,17 111,27 10,27" fill="#f07022"/><rect x="2" y="1.5" width="131" height="31" rx="8" fill="none" stroke="#ff0000" stroke-width="4"/></svg>
<div class="a" style="left:996px;top:572px;width:11px;height:11px;background:#e6e6e6;border-radius:2px"></div>
<svg class="a" style="left:996px;top:569px" width="16" height="14"><path d="M2.5,8 L5,11.5 L13,1.5" fill="none" stroke="#ff8c1a" stroke-width="2" stroke-linecap="round"/></svg>
<div class="a" style="left:1023px;top:572px;font-size:12.5px;font-weight:bold;color:#fff">STIFF1</div>
</div>
<!-- status bar -->
<div class="a st" style="left:23px;color:#8c8c8c">Design code:</div>
<div class="a st b" style="left:100px">EN</div>
<div class="a st" style="left:134px;color:#8c8c8c">Analysis:</div>
<div class="a st b" style="left:185px">Stress, strain</div>
<div class="a st" style="left:276px;color:#8c8c8c">Load effects:</div>
<div class="a st b" style="left:353px">In equilibrium</div>
<div class="a st" style="left:450px;color:#8c8c8c">Units:</div>
<div class="a st b" style="left:490px">mm</div>
<div class="a st" style="left:1797px;color:#fff"><span style="color:#f07022">www.</span>ideastatica<span style="color:#f07022">.com</span></div>


</body></html>
